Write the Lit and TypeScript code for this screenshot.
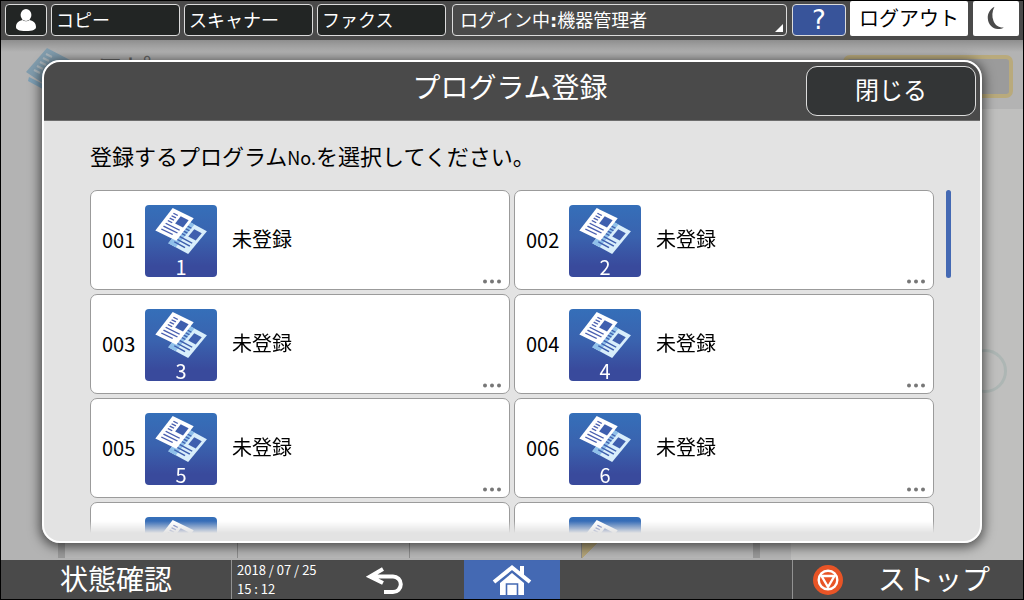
import { LitElement, html, css, svg } from "lit";
import { customElement, property } from "lit/decorators.js";

const lines = (color: string) => svg`
  <path d="M4 4.500h5M4 7.500h5M4 10.500h5M4 13.500h5" stroke=${color} stroke-width="1.300"/>
  <path d="M4 17h16M4 20.500h16M4 24h13" stroke=${color} stroke-width="1.300"/>`;

@customElement("program-tile")
export class ProgramTile extends LitElement {
  @property({ type: Number }) number = 1;

  static styles = css`
    :host { display: block; }
    .card {
      display: flex;
      align-items: center;
      position: relative;
      box-sizing: border-box;
      width: 100%;
      height: 100px;
      padding: 2px 11px 0;
      border: 1px solid #9b9b9b;
      border-radius: 7px;
      background: #fff;
      color: #000;
      font: 20px "Noto Sans CJK JP", sans-serif;
      text-align: left;
      cursor: pointer;
    }
    .no { width: 43px; padding-bottom: 4px; box-sizing: border-box; }
    .icon {
      display: flex;
      flex-direction: column;
      align-items: center;
      width: 72px;
      height: 72px;
      border-radius: 4px;
      background: linear-gradient(#356fb9, #3a62ae 45%, #394a9c 85%);
      color: #fff;
      line-height: 20px;
    }
    .icon svg { display: block; width: 72px; height: 52px; flex: none; }
    .name { margin-left: 15px; padding-bottom: 4px; line-height: 24px; }
    .more { position: absolute; right: 8px; bottom: 5px; display: block; }
  `;

  render() {
    return html`
      <button class="card" type="button">
        <span class="no">${String(this.number).padStart(3, "0")}</span>
        <span class="icon">
          <svg viewBox="0 0 72 52" fill="none" aria-hidden="true">
            <g transform="matrix(.83 .445 -.67 .81 42 15.6)">
              <rect width="24" height="28" fill="#d9eefb"/>
              <rect width="9" height="28" fill="#8fc0ea"/>
              <rect x="12" y="4" width="9" height="9" fill="#3f5fae"/>
              ${lines("#3f5fae")}
            </g>
            <g transform="matrix(.875 .43 -.62 .8 27.7 3)">
              <rect width="24" height="28" fill="#fff"/>
              <rect x="12" y="4" width="9" height="9" fill="#3f5fae"/>
              ${lines("#4a5fb0")}
            </g>
          </svg>
          <span>${this.number}</span>
        </span>
        <span class="name">未登録</span>
        <svg class="more" width="18" height="5" fill="#777" aria-hidden="true">
          <circle cx="2" cy="2.5" r="2"/><circle cx="9" cy="2.5" r="2"/><circle cx="16" cy="2.5" r="2"/>
        </svg>
      </button>`;
  }
}

@customElement("app-root")
export class AppRoot extends LitElement {
  static styles = css`
    :host {
      display: flex;
      flex-direction: column;
      box-sizing: border-box;
      height: 100vh;
      border: 1px solid #000;
      overflow: hidden;
      background: #b3b3b3;
      font-family: "Noto Sans CJK JP", sans-serif;
    }
    button { font-family: inherit; margin: 0; padding: 0; border: 0; cursor: pointer; }
    svg { display: block; flex: none; }

    .top {
      display: flex;
      gap: 4px;
      height: 39px;
      padding: 0 4px;
      flex: none;
      background: #4a4a4a;
    }
    .top button {
      box-sizing: border-box;
      height: 32px;
      margin-top: 3px;
      padding-bottom: 2px;
      border: 1px solid #dcdcdc;
      border-radius: 4px;
      background: #222524;
      color: #fff;
      font-size: 18px;
      line-height: 28px;
      text-align: left;
      white-space: nowrap;
    }
    .top .user { width: 42px; display: grid; place-items: center; padding: 0; }
    .top .tab { width: 129px; padding-left: 4px; }
    .top .login { position: relative; flex: 1; margin-left: 2px; padding-left: 7px; background: #4a4a4a; }
    .colon { font-family: "DejaVu Sans", sans-serif; font-weight: bold; }
    .corner { position: absolute; right: 3px; bottom: 3px; }
    .top .help {
      width: 54px;
      margin-left: 1px;
      padding: 0;
      background: #38549a;
      font: 26px/30px "DejaVu Sans", sans-serif;
      text-align: center;
    }
    .top .logout, .top .sleep {
      height: 35px;
      margin-top: 0;
      border: 0;
      border-radius: 2px;
      background: #fff;
      color: #000;
    }
    .top .logout { width: 118px; font-size: 20px; line-height: 32px; text-align: center; }
    .top .sleep { width: 46px; margin-left: 1px; display: grid; place-items: center; }

    .stage { position: relative; flex: 1; min-height: 0; }
    .behind { display: flex; flex-direction: column; height: 100%; }
    .behind-head {
      display: flex;
      height: 69px;
      padding: 0 10px 0 25px;
      box-sizing: border-box;
      background: linear-gradient(#8e8e8e, #b3b3b3 12px);
      color: #666;
      font-size: 28px;
      line-height: 28px;
    }
    .behind-title { padding: 13px 0 0 24px; flex: 1; }
    .behind-start {
      box-sizing: border-box;
      width: 170px;
      height: 43px;
      margin-top: 15px;
      border: 4px solid #b9aa7c;
      border-radius: 7px;
      background: #9b9b9b;
    }
    .behind-body { display: flex; flex: 1; }
    .behind-left { display: flex; flex: 1; align-items: flex-end; padding: 0 31px 2px 57px; }
    .behind-row {
      display: grid;
      grid-template-columns: repeat(4, 1fr);
      flex: 1;
      height: 40px;
      border: solid #999;
      border-width: 0 7px;
      background: #b7b7b7;
    }
    .behind-row span + span { border-left: 1px solid #8d8d8d; }
    .behind-row .marked {
      background: linear-gradient(135deg, #b5a67a 13px, transparent 13px) 0 22px no-repeat;
    }
    .behind-right { width: 232px; background: #bfbfbe; }
    .ring {
      box-sizing: border-box;
      width: 44px;
      height: 44px;
      margin: 240px 16px 0 auto;
      border: 3px solid #adb6b4;
      border-radius: 50%;
    }

    .dialog, .shade {
      position: absolute;
      inset: 20px 41px 17px;
      border-radius: 18px;
    }
    .shade { box-shadow: 0 2px 12px 2px rgba(0, 0, 0, 0.6); }
    .dialog {
      display: flex;
      flex-direction: column;
      box-sizing: border-box;
      border: 2px solid #fff;
      overflow: hidden;
      background: #e3e3e3;
    }
    .dialog-head {
      display: grid;
      grid-template-columns: 1fr auto 1fr;
      align-items: center;
      height: 59px;
      padding-right: 4px;
      flex: none;
      box-sizing: border-box;
      border-bottom: 1px solid #6d6d6d;
      background: #4a4a4a;
      color: #fff;
    }
    h1 { grid-column: 2; margin: 0 0 10px; font-size: 28px; line-height: 36px; font-weight: 400; }
    .close {
      justify-self: end;
      width: 170px;
      height: 50px;
      box-sizing: border-box;
      color: #fff;
      font-size: 24px;
      line-height: 44px;
    }
    .dialog .close {
      padding-bottom: 4px;
      border: 1px solid #dcdcdc;
      border-radius: 11px;
      background: #333536;
    }
    .content { display: flex; flex-direction: column; flex: 1; min-height: 0; padding: 0 29px 8px 46px; }
    .lead { margin: 18px 0 19px; font-size: 22px; line-height: 32px; color: #000; }
    .lead small { font-size: 18px; line-height: 20px; }
    .scroller { display: flex; gap: 12px; flex: 1; min-height: 0; }
    .list {
      display: grid;
      grid-template-columns: 1fr 1fr;
      gap: 4px;
      flex: 1;
      align-content: start;
      overflow: hidden;
      -webkit-mask-image: linear-gradient(to top, transparent, #000 12px);
      mask-image: linear-gradient(to top, transparent, #000 12px);
    }
    .thumb { width: 5px; height: 88px; border-radius: 3px; background: #4469b3; }

    .bottom { display: grid; grid-template-columns: 1fr 96px 1fr; height: 39px; flex: none; background: #4a4a4a; color: #fff; }
    .bottom button { background: none; color: #fff; font-size: 28px; line-height: 32px; white-space: nowrap; }
    .side { display: flex; }
    .bottom .status { width: 230px; padding-bottom: 4px; }
    time {
      box-sizing: border-box;
      width: 122px;
      padding: 0 0 0 5px;
      border-left: 1px solid #929292;
      font-size: 13px;
      line-height: 19px;
      white-space: nowrap;
    }
    .bottom .back { display: flex; align-items: center; padding: 0 12px; }
    .bottom .home { display: grid; place-items: center; background: #4469b3; }
    .right { justify-content: flex-end; }
    .bottom .stop {
      display: flex;
      align-items: center;
      justify-content: space-between;
      width: 231px;
      padding: 0 33px 0 19px;
      border-left: 1px solid #929292;
    }
    .stop span { padding-bottom: 4px; }
  `;

  render() {
    return html`
      <header class="top">
        <button class="user" type="button" aria-label="ユーザー">
          <svg width="20" height="24" fill="#fff"><ellipse cx="10" cy="7" rx="5.4" ry="6"/><path d="M6.500 12C2 13 0 15.500 0 19c0 2.500 3 4 10 4s10-1.500 10-4c0-3.500-2-6-6.500-7-2 1.700-5 1.700-7 0z"/></svg>
        </button>
        <button class="tab" type="button">コピー</button>
        <button class="tab" type="button">スキャナー</button>
        <button class="tab" type="button">ファクス</button>
        <button class="login" type="button" aria-haspopup="true">ログイン中<span class="colon">:</span>機器管理者
          <svg class="corner" width="8" height="8" fill="#fff"><path d="M8 0v8H0z"/></svg>
        </button>
        <button class="help" type="button">?</button>
        <button class="logout" type="button">ログアウト</button>
        <button class="sleep" type="button" aria-label="スリープ">
          <svg width="20" height="24" fill="#4a4a4a"><path d="M8.500 .8C3.500 3.500 1.500 8 1.800 12.500c.4 6 5 10.500 10 10.500 2.500 0 4.500-.5 6-1.500-5 .3-8.500-2-10.300-6.500-1.800-4.500-1.500-9.500 1-14.200z"/></svg>
        </button>
      </header>

      <main class="stage">
        <div class="behind" aria-hidden="true">
          <div class="behind-head">
            <svg width="46" height="52" viewBox="0 0 46 52">
              <path d="M21 8l23 12-20 28L0 32z" fill="#809cad"/>
              <path d="M3 37l24 12-3 4L2 41z" fill="#7d9fb5"/>
              <path d="M20 14l6 3M17 18l6 3M14 22l6 3M11 26l6 3M8 30l6 3" stroke="#a9b4ba" stroke-width="2"/>
            </svg>
            <div class="behind-title">コピー</div>
            <div class="behind-start"></div>
          </div>
          <div class="behind-body">
            <div class="behind-left">
              <div class="behind-row"><span></span><span></span><span></span><span class="marked"></span></div>
            </div>
            <div class="behind-right"><div class="ring"></div></div>
          </div>
        </div>
        <div class="shade"></div>

        <section class="dialog" role="dialog" aria-labelledby="title">
          <div class="dialog-head">
            <h1 id="title">プログラム登録</h1>
            <button class="close" type="button">閉じる</button>
          </div>
          <div class="content">
            <p class="lead">登録するプログラム<small>No.</small>を選択してください。</p>
            <div class="scroller">
              <div class="list">
                ${[1, 2, 3, 4, 5, 6, 7, 8].map((n) => html`<program-tile .number=${n}></program-tile>`)}
              </div>
              <div class="thumb"></div>
            </div>
          </div>
        </section>
      </main>

      <footer class="bottom">
        <div class="side">
          <button class="status" type="button">状態確認</button>
          <time datetime="2018-07-25T15:12">2018 / 07 / 25<br>15 : 12</time>
          <button class="back" type="button" aria-label="戻る">
            <svg width="40" height="32" fill="none" stroke="#fff" stroke-width="4"><path d="M18 5L5 12.500L18 19M5 12.500H28a7.800 7.800 0 0 1 0 15.600H19"/></svg>
          </button>
        </div>
        <button class="home" type="button" aria-label="ホーム">
          <svg width="40" height="32" fill="#fff">
            <path d="M28 2h4v12l-4-4z"/>
            <path d="M2 18L20 3.500L38 18" fill="none" stroke="#fff" stroke-width="4"/>
            <path d="M8 31V19L20 9l12 10v12z"/>
            <path d="M14.500 32V20h11v12" fill="none" stroke="#4469b3" stroke-width="1.600"/>
          </svg>
        </button>
        <div class="side right">
          <button class="stop" type="button">
            <svg width="32" height="32" fill="none" stroke="#fff" stroke-width="2.400" stroke-linejoin="round">
              <circle cx="16" cy="16" r="15" fill="#e85426" stroke="none"/>
              <circle cx="16" cy="16" r="9.300"/>
              <path d="M9.500 12h13L16 23z"/>
            </svg>
            <span>ストップ</span>
          </button>
        </div>
      </footer>`;
  }
}
